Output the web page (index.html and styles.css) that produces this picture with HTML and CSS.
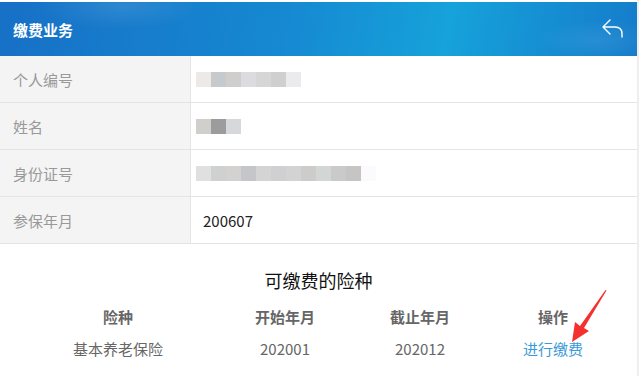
FILE: index.html
```html
<!DOCTYPE html>
<html lang="zh-CN">
<head>
    <meta charset="UTF-8">
    <meta name="viewport" content="width=device-width, initial-scale=1.0">
    <title>缴费业务</title>
    <link rel="stylesheet" href="styles.css">
</head>
<body>
    <div class="page">
        <!-- Header -->
        <div class="header">
            <span class="header-title">缴费业务</span>
            <svg class="back-icon" width="24" height="22" viewBox="0 0 24 22">
                <path d="M9 3 L2 10 L9 17 M2 10 H14 Q21 10 21 17 V20" fill="none" stroke="#fff" stroke-width="1.4" stroke-linecap="round" stroke-linejoin="round"/>
            </svg>
        </div>

        <!-- Info rows -->
        <div class="info-table">
            <div class="info-row">
                <div class="info-label">个人编号</div>
                <div class="info-value">
                    <div class="blur">
                        <i style="background:#ede9e6"></i><i style="background:#c7cacd"></i><i style="background:#cfcecc"></i><i style="background:#dcdcde"></i><i style="background:#d7d6d7"></i><i style="background:#cfcfcf"></i><i style="background:#ebebed"></i>
                    </div>
                </div>
            </div>
            <div class="info-row">
                <div class="info-label">姓名</div>
                <div class="info-value">
                    <div class="blur">
                        <i style="background:#d0cfcc"></i><i style="background:#9c9c9e"></i><i style="background:#d6d8d9"></i>
                    </div>
                </div>
            </div>
            <div class="info-row">
                <div class="info-label">身份证号</div>
                <div class="info-value">
                    <div class="blur">
                        <i style="background:#e0e0e0"></i><i style="background:#cfd0d0"></i><i style="background:#d3d2d0"></i><i style="background:#c5c6ca"></i><i style="background:#d5d4d4"></i><i style="background:#d0cfd1"></i><i style="background:#d4d3d4"></i><i style="background:#cdcccb"></i><i style="background:#d2d6d5"></i><i style="background:#cbcacb"></i><i style="background:#c6c5c4"></i><i style="background:#fbfbfd"></i>
                    </div>
                </div>
            </div>
            <div class="info-row">
                <div class="info-label">参保年月</div>
                <div class="info-value">200607</div>
            </div>
        </div>

        <!-- Payable insurance -->
        <div class="section">
            <h2 class="section-title">可缴费的险种</h2>
            <div class="pay-grid">
                <div class="pay-head">险种</div>
                <div class="pay-head">开始年月</div>
                <div class="pay-head">截止年月</div>
                <div class="pay-head">操作</div>
                <div class="pay-cell">基本养老保险</div>
                <div class="pay-cell">202001</div>
                <div class="pay-cell">202012</div>
                <div class="pay-cell"><a class="pay-link">进行缴费</a></div>
            </div>
        </div>

        <svg class="pointer" width="50" height="60" viewBox="0 0 50 60">
            <polygon points="46.5,5.5 24,43 29,46 12,57 15,37 20,41 45.5,5" fill="#f5312f"/>
        </svg>
    </div>
</body>
</html>
```

FILE: styles.css
```css
body {
    margin: 0;
    font-family: "Noto Sans CJK SC", "Microsoft YaHei", sans-serif;
    background-color: #fff;
}

.page {
    position: relative;
    width: 637px;
    height: 376px;
    border-right: 2px solid #eeeeee;
    padding-top: 2px;
    box-sizing: content-box;
    overflow: hidden;
}

.header {
    height: 54px;
    display: flex;
    align-items: center;
    justify-content: space-between;
    padding: 0 12px 0 13px;
    background: radial-gradient(ellipse 90px 26px at 120px 4px, rgba(255,255,255,0.10), transparent 90%),
                radial-gradient(ellipse 70px 22px at 600px 38px, rgba(255,255,255,0.08), transparent 90%),
                linear-gradient(100deg, #1770c6 0%, #1689d2 45%, #16a2da 70%, #157ccb 100%);
}

.header-title {
    color: #fff;
    font-size: 15px;
    font-weight: bold;
}

.back-icon {
    margin-top: -2px;
}

.info-row {
    display: flex;
    height: 46px;
    border-bottom: 1px solid #e4e4e4;
}

.info-label {
    width: 177px;
    padding-left: 13px;
    background-color: #f4f4f4;
    border-right: 1px solid #e4e4e4;
    color: #999;
    font-size: 15px;
    display: flex;
    align-items: center;
}

.info-value {
    padding-left: 12px;
    display: flex;
    align-items: center;
    font-size: 15px;
    color: #222;
}

.blur {
    display: flex;
    margin-left: -7px;
    filter: blur(0.3px);
}

.blur i {
    width: 15px;
    height: 15px;
}

.section {
    padding-top: 21px;
}

.section-title {
    margin: 0;
    text-align: center;
    font-size: 18px;
    font-weight: normal;
    color: #111;
    line-height: 30px;
}

.pay-grid {
    display: grid;
    grid-template-columns: 236px 98px 172px 94px;
    margin-top: 9px;
    row-gap: 6px;
}

.pay-head,
.pay-cell {
    text-align: center;
    font-size: 15px;
    color: #666;
    line-height: 26px;
}

.pay-head {
    font-weight: bold;
}

.pay-link {
    color: #3a9ad9;
    cursor: pointer;
}

.pointer {
    position: absolute;
    left: 560px;
    top: 285px;
}
```
